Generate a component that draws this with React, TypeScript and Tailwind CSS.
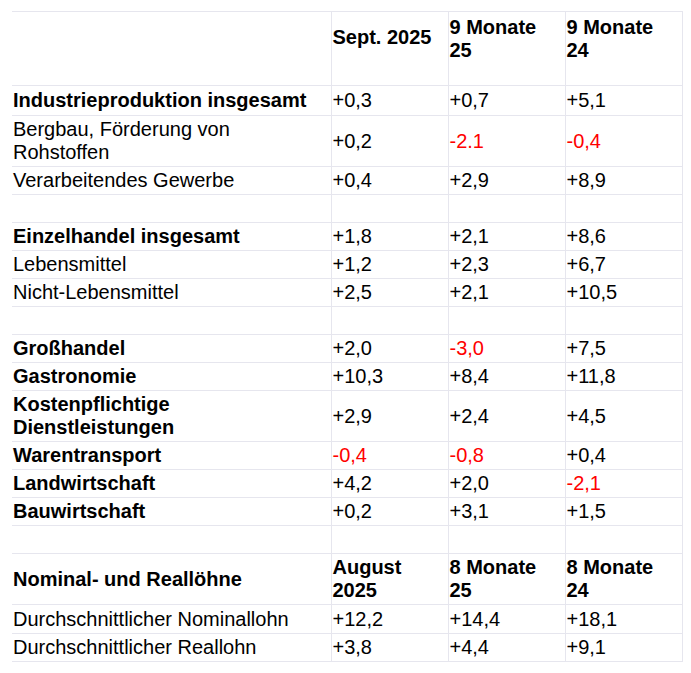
import React from "react";

type Row = {
  label?: React.ReactNode;
  bold?: boolean;
  vals?: [string, string, string];
  h?: string;
};

const rows: Row[] = [
  { label: "Industrieproduktion insgesamt", bold: true, vals: ["+0,3", "+0,7", "+5,1"], h: "h-[30px]" },
  { label: <>Bergbau, Förderung von<br />Rohstoffen</>, vals: ["+0,2", "-2.1", "-0,4"] },
  { label: "Verarbeitendes Gewerbe", vals: ["+0,4", "+2,9", "+8,9"] },
  {},
  { label: "Einzelhandel insgesamt", bold: true, vals: ["+1,8", "+2,1", "+8,6"] },
  { label: "Lebensmittel", vals: ["+1,2", "+2,3", "+6,7"] },
  { label: "Nicht-Lebensmittel", vals: ["+2,5", "+2,1", "+10,5"] },
  {},
  { label: "Großhandel", bold: true, vals: ["+2,0", "-3,0", "+7,5"] },
  { label: "Gastronomie", bold: true, vals: ["+10,3", "+8,4", "+11,8"] },
  { label: <>Kostenpflichtige<br />Dienstleistungen</>, bold: true, vals: ["+2,9", "+2,4", "+4,5"] },
  { label: "Warentransport", bold: true, vals: ["-0,4", "-0,8", "+0,4"] },
  { label: "Landwirtschaft", bold: true, vals: ["+4,2", "+2,0", "-2,1"] },
  { label: "Bauwirtschaft", bold: true, vals: ["+0,2", "+3,1", "+1,5"] },
  {},
];

const cell = "border border-[#e6e6ee] px-[1px] py-[2px] align-middle";
const headCell = "border border-[#e6e6ee] px-[1px] pt-[4px] pb-0 align-middle";

export default function App() {
  return (
    <div
      className="bg-white w-[691px] h-[673px] pt-[11px] pl-[12px] text-black text-[20px] leading-[23px]"
      style={{ fontFamily: '"Liberation Sans", Arial, sans-serif' }}
    >
      <table className="border-collapse table-fixed w-[670px] border-l-0">
        <colgroup>
          <col className="w-[319px]" />
          <col className="w-[117px]" />
          <col className="w-[117px]" />
          <col className="w-[117px]" />
        </colgroup>
        <tbody>
          <tr className="font-bold">
            <td className={`${cell} border-l-0`}>&nbsp;</td>
            <td className={cell}>Sept. 2025<br />&nbsp;</td>
            <td className={headCell}>9 Monate<br />25<br />&nbsp;</td>
            <td className={headCell}>9 Monate<br />24<br />&nbsp;</td>
          </tr>
          {rows.map((r, i) => (
            <tr key={i} className={r.h ?? ""}>
              <td className={`${cell} border-l-0 ${r.bold ? "font-bold" : ""}`}>{r.label ?? "\u00a0"}</td>
              {(r.vals ?? ["\u00a0", "\u00a0", "\u00a0"]).map((v, j) => (
                <td key={j} className={`${cell} ${v.startsWith("-") ? "text-[#ff0000]" : ""}`}>{v}</td>
              ))}
            </tr>
          ))}
          <tr className="font-bold">
            <td className={`${cell} border-l-0`}>Nominal- und Reallöhne</td>
            <td className={cell}>August<br />2025</td>
            <td className={cell}>8 Monate<br />25</td>
            <td className={cell}>8 Monate<br />24</td>
          </tr>
          <tr className="h-[29px]">
            <td className={`${cell} border-l-0`}>Durchschnittlicher Nominallohn</td>
            <td className={cell}>+12,2</td>
            <td className={cell}>+14,4</td>
            <td className={cell}>+18,1</td>
          </tr>
          <tr>
            <td className={`${cell} border-l-0`}>Durchschnittlicher Reallohn</td>
            <td className={cell}>+3,8</td>
            <td className={cell}>+4,4</td>
            <td className={cell}>+9,1</td>
          </tr>
        </tbody>
      </table>
    </div>
  );
}
